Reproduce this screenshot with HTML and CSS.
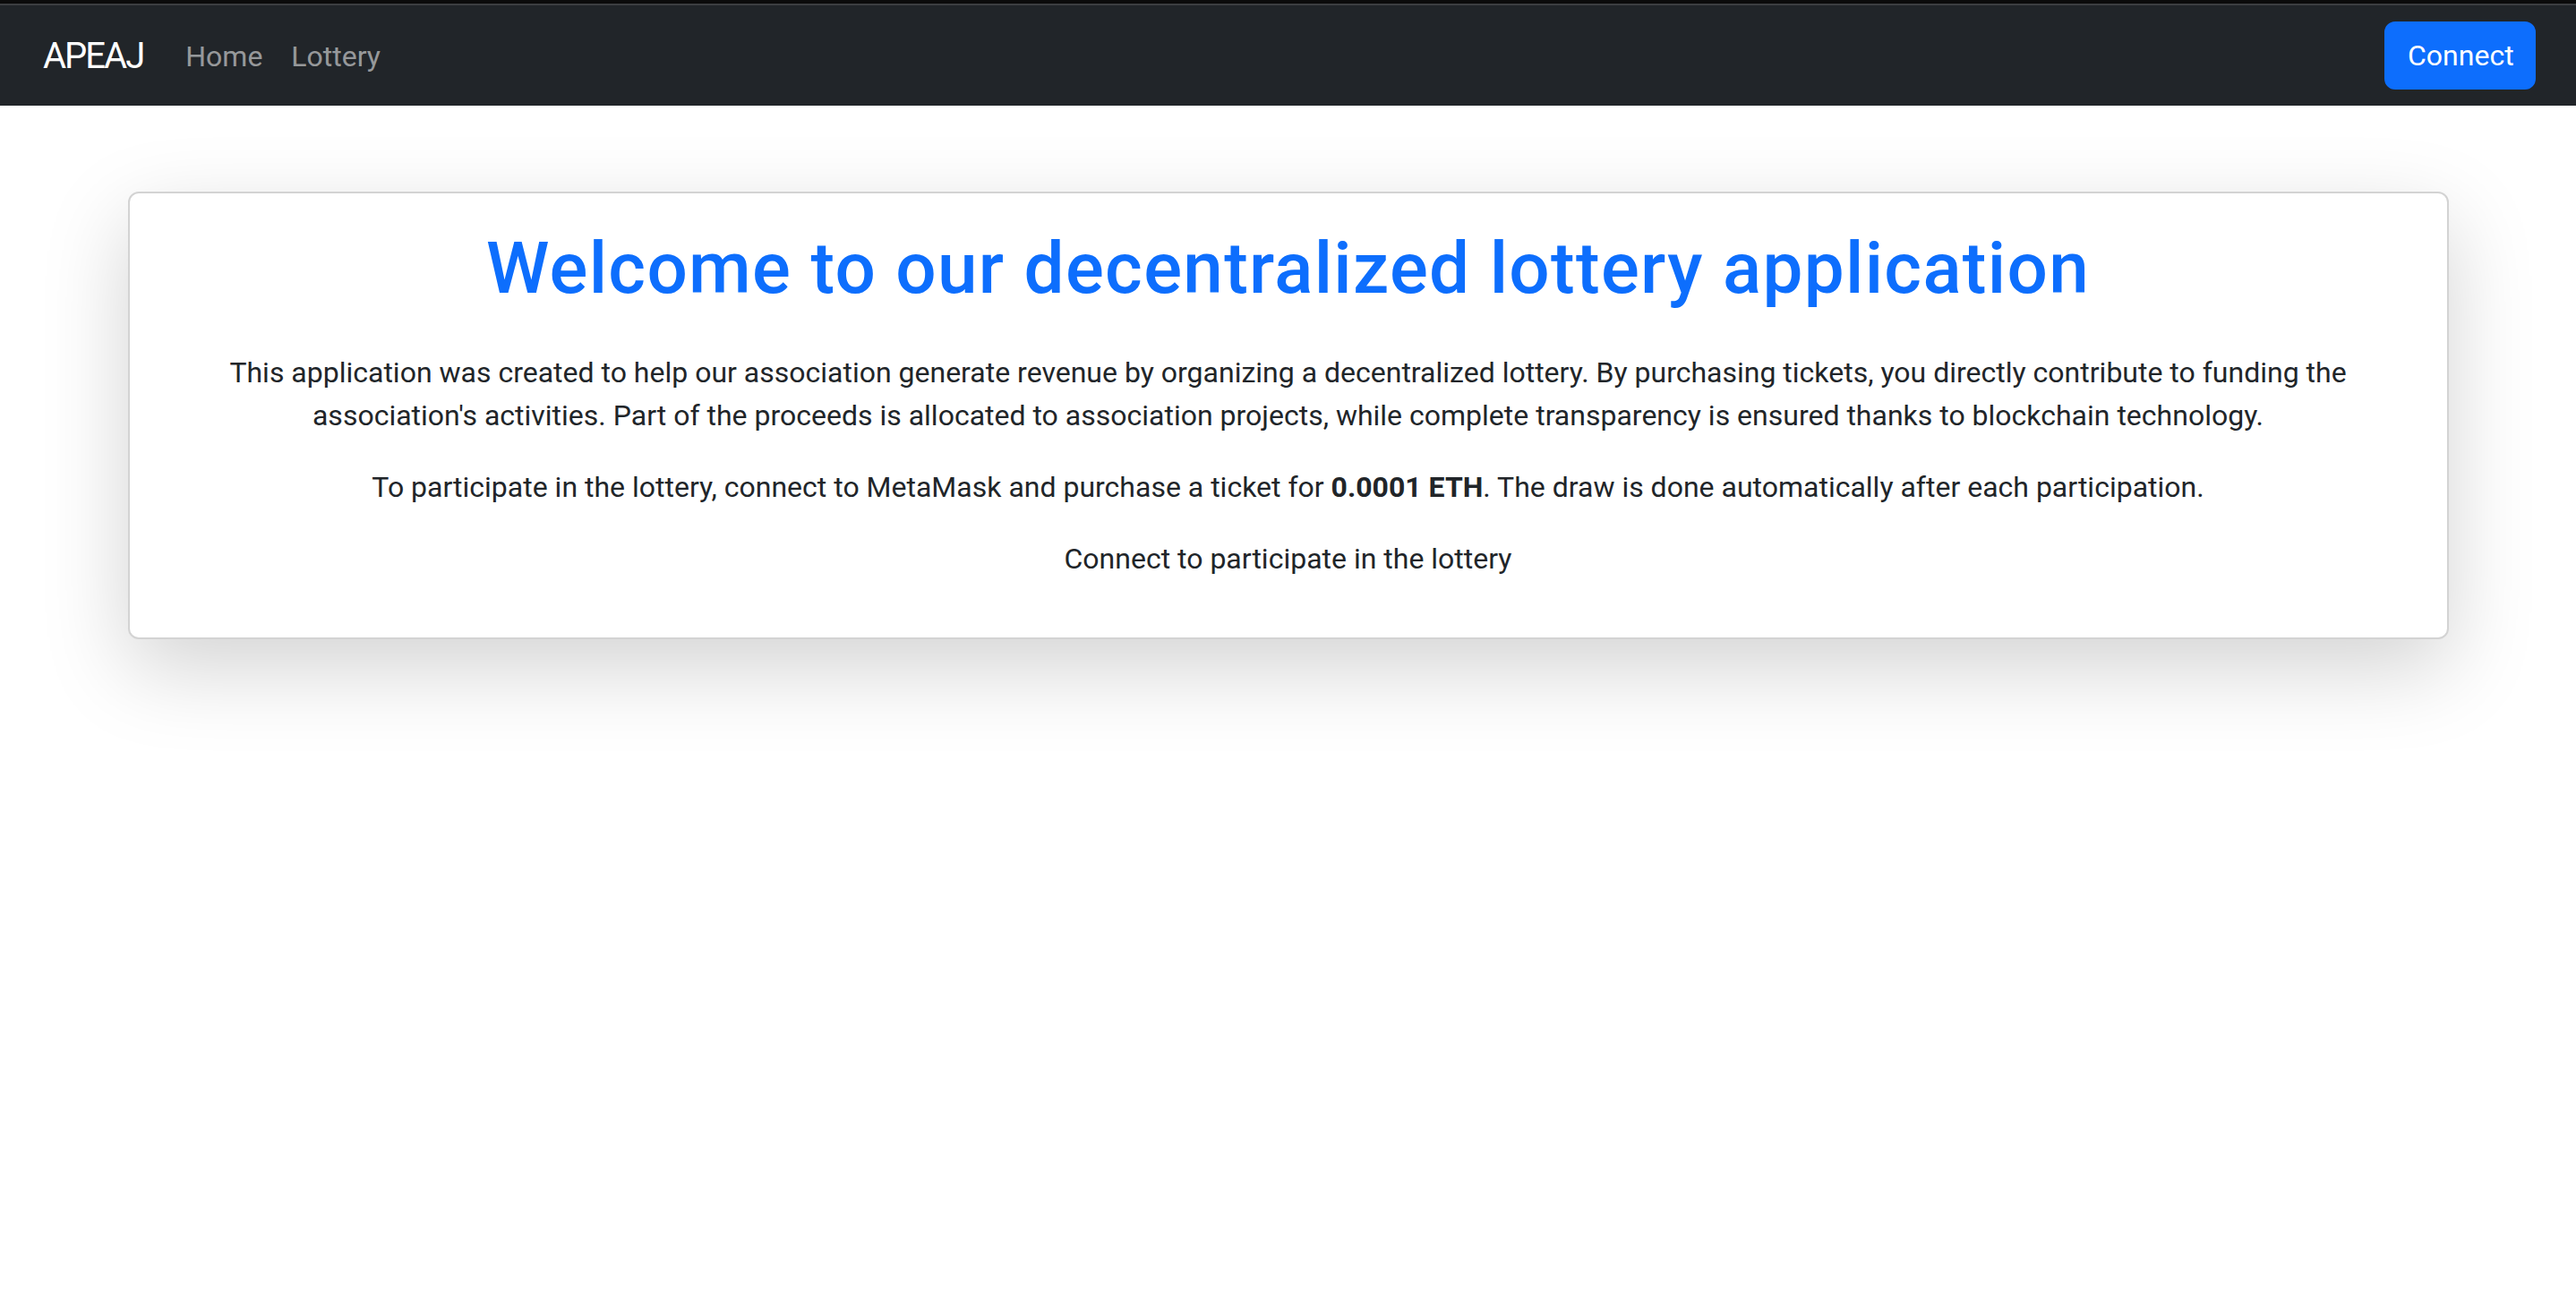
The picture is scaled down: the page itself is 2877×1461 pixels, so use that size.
FILE: index.html
```html
<!DOCTYPE html>
<html lang="en">
<head>
<meta charset="utf-8">
<title>APEAJ Lottery</title>
<link rel="stylesheet" href="styles.css">
</head>
<body>
<div class="topstrip"></div>
<nav class="navbar">
  <div class="nav-left">
    <a class="brand" href="#">APEAJ</a>
    <a class="nav-link" href="#">Home</a>
    <a class="nav-link" href="#">Lottery</a>
  </div>
  <button class="btn-connect">Connect</button>
</nav>
<main class="container">
  <section class="card">
    <h1 class="title">Welcome to our decentralized lottery application</h1>
    <p>This application was created to help our association generate revenue by organizing a decentralized lottery. By purchasing tickets, you directly contribute to funding the association's activities. Part of the proceeds is allocated to association projects, while complete transparency is ensured thanks to blockchain technology.</p>
    <p>To participate in the lottery, connect to MetaMask and purchase a ticket for <strong>0.0001 ETH</strong>. The draw is done automatically after each participation.</p>
    <p>Connect to participate in the lottery</p>
  </section>
</main>
</body>
</html>
```
FILE: styles.css
```css
* { box-sizing: border-box; }
html, body { margin: 0; padding: 0; }
body {
  font-family: Roboto, "Liberation Sans", sans-serif;
  font-size: 32px;
  line-height: 1.5;
  color: #212529;
  background: #fff;
  min-height: 100vh;
}
.topstrip {
  height: 6px;
  background: #0b0b0b;
  border-bottom: 2px solid #3c3e41;
}
.navbar {
  background: #212529;
  height: 112px;
  padding: 18px 45px 16px 48px;
  display: flex;
  align-items: center;
  justify-content: space-between;
}
.nav-left { display: flex; align-items: center; }
.brand {
  color: #fff;
  text-decoration: none;
  font-size: 40px;
  letter-spacing: -2px;
  margin-right: 31px;
}
.nav-link {
  color: rgba(255,255,255,.55);
  text-decoration: none;
  font-size: 32px;
  padding: 0 16px;
}
.btn-connect {
  font-family: inherit;
  font-size: 32px;
  line-height: 1.5;
  color: #fff;
  background: #0d6efd;
  border: 2px solid #0d6efd;
  border-radius: 12px;
  padding: 10px 24px;
  height: 76px;
  width: 169px;
  margin-top: -2px;
}
.container {
  max-width: 2640px;
  margin: 96px auto 0;
  padding: 0 24px 240px;
}
.card {
  background: #fff;
  border: 2px solid #d3d3d3;
  border-radius: 12px;
  padding: 32px;
  text-align: center;
  box-shadow: 0 32px 96px rgba(0,0,0,.175);
}
.title {
  color: #0d6efd;
  font-size: 80px;
  font-weight: 500;
  letter-spacing: 1.3px;
  line-height: 1.2;
  margin: 4px 0 44px;
}
.card p { margin: 0 0 32px; }
```
